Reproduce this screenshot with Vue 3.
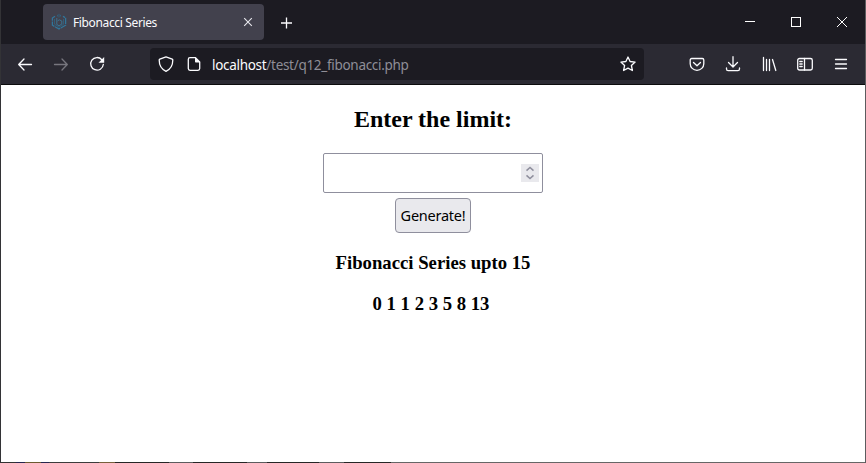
<script setup>
import { ref } from 'vue'

const limit = ref('')
const upto = 15

function fibonacci(max) {
  const out = []
  let a = 0
  let b = 1
  while (a <= max) {
    out.push(a)
    ;[a, b] = [b, a + b]
  }
  return out
}
const series = fibonacci(upto).join(' ')
</script>

<template>
  <div class="window">
    <header class="titlebar">
      <div class="tab">
        <svg class="favicon" width="16" height="18" viewBox="0 0 16 18" fill="none" stroke="#31769b">
          <path d="M4 3.200 1.400 5v7.200L8 16l6.600-3.800V5L12 3.200" stroke-width="1.300" stroke-dasharray="6 .7" />
          <path d="M5.800 5v6.500L8 12.700l2.800-1.600V8L8.300 6.800 6.500 8" stroke="#3b7391" stroke-width="1" />
          <path d="M3.500 6v5.200L8 14.200l4.500-2.800V6M6.500 3.500V1.800M8 4.500V.8M9.500 3.500V1.800" stroke="#2d6685" stroke-width=".8" />
        </svg>
        <span class="tab-title">Fibonacci Series</span>
        <svg class="tab-close" width="10" height="10" viewBox="0 0 10 10" fill="none" stroke="#e8e8ee" stroke-width="1.100">
          <path d="m1.200 1.200 7.600 7.600M8.800 1.200 1.200 8.800" />
        </svg>
      </div>
      <svg class="new-tab" width="12" height="13" viewBox="0 0 12 13" fill="none" stroke="#fbfbfe" stroke-width="1.300">
        <path d="M5.500 1.500v11M0 7h11" />
      </svg>
      <div class="controls">
        <svg width="46" height="44" viewBox="0 0 46 44"><path d="M18 21.500h10" stroke="#fff" /></svg>
        <svg width="46" height="44" viewBox="0 0 46 44"><rect x="18.500" y="17.500" width="9" height="9" fill="none" stroke="#fff" /></svg>
        <svg width="46" height="44" viewBox="0 0 46 44"><path d="m18 17 10 10M28 17 18 27" stroke="#fff" /></svg>
      </div>
    </header>

    <nav class="toolbar">
      <div class="nav-buttons">
        <svg class="icon" viewBox="0 0 16 16"><path d="M14.500 8.500H2M7 3 1.700 8.500 7 14" /></svg>
        <svg class="icon dim" viewBox="0 0 16 16"><path d="M1.500 8.500H14M9 3l5.300 5.500L9 14" /></svg>
        <svg class="icon" viewBox="0 0 16 16"><path d="M12.800 3.700A6.300 6.300 0 1 0 14.300 8.500" /><path class="solid" d="M15.200 1v5.700H9.500z" /></svg>
      </div>
      <div class="urlbar">
        <svg class="icon shield" viewBox="0 0 16 16"><path d="M8 .9 14.200 3.200c.5.200.6.500.6.900 0 5-1.800 9-6.800 11.200C3 13.100 1.200 9.100 1.200 4.100c0-.4.100-.7.600-.9z" /></svg>
        <svg class="icon page" viewBox="0 0 16 16"><path d="M9.500 1.700H4A1.700 1.700 0 0 0 2.300 3.400v9.200A1.700 1.700 0 0 0 4 14.300h8a1.700 1.700 0 0 0 1.700-1.700V6z" /><path class="solid" d="M9 1.200v4.200c0 .8.400 1.100 1.100 1.100h4.100z" /></svg>
        <span class="url"><b>localhost</b>/test/q12_fibonacci.php</span>
        <svg class="icon star" viewBox="0 0 16 16"><path d="m8 1 2.100 4.500 5 .6-3.700 3.400 1 5L8 12.100l-4.400 2.400 1-5L.9 6.100l5-.6z" /></svg>
      </div>
      <div class="tools">
        <svg class="icon" viewBox="0 0 16 16"><path d="M2.700 2.500h10.600c.9 0 1.500.6 1.500 1.500v3.700a6.800 6.600 0 0 1-13.600 0V4c0-.9.600-1.500 1.500-1.500zM4.500 6.500 8 9.800l3.500-3.300" /></svg>
        <svg class="icon" viewBox="0 0 16 16"><path d="M8 .7v10M3.500 6.500 8 11l4.500-4.500M1.500 12v1c0 1 .6 1.600 1.600 1.600h9.800c1 0 1.600-.6 1.600-1.600v-1" /></svg>
        <svg class="icon" viewBox="0 0 16 16"><path d="M2.500 1.500v13M5.500 3.500v11M8.500 3.500v11M11.500 3.500l3.300 11" /></svg>
        <svg class="icon" viewBox="0 0 16 16"><rect x=".7" y="2.500" width="14.600" height="11.500" rx="1.800" /><path d="M7.500 2.500V14M2.800 5.500h2.400M2.800 8h2.400M2.800 10.500h2.400" /></svg>
        <svg class="icon" viewBox="0 0 16 16"><path d="M2.500 3.500h11M2.500 8h11M2.500 12.500h11" /></svg>
      </div>
    </nav>

    <main class="page-body">
      <h2>Enter the limit:</h2>
      <div class="field">
        <input v-model="limit" type="text" aria-label="Limit" />
        <span class="spinner">
          <svg width="18" height="18" viewBox="0 0 18 18" fill="none" stroke="#8f8f9d" stroke-width="1.500"><path d="m5.500 6.600 3.500-3.200 3.500 3.200M5.500 11.400l3.500 3.200 3.500-3.200" /></svg>
        </span>
      </div>
      <button type="button"><span>Generate!</span></button>
      <h3>Fibonacci Series upto {{ upto }}</h3>
      <h3 class="series">{{ series }}</h3>
    </main>
    <div class="window-edge"></div>
  </div>
</template>

<style>
body { margin: 0; background: #fff; }
</style>

<style scoped>
.window {
  box-sizing: border-box;
  width: 866px;
  height: 463px;
  display: flex;
  flex-direction: column;
  border: solid;
  border-width: 0 1px;
  border-color: #333336 #5c5c5e #333336 #333336;
  overflow: hidden;
  background: #fff;
}
.window-edge {
  height: 1px;
  flex: none;
  background: linear-gradient(90deg, #333 0 15px, #26264e 15px 24px, #6b5a30 24px 40px, #26264e 40px 48px, #3c3c3c 48px 98px, #77603c 98px 114px, #262626 114px 168px, #5c5c5e 168px 192px, #262626 192px 246px, #5c5c5e 246px 266px, #262626 266px 318px, #5c5c5e 318px 343px, #262626 343px 390px, #666 390px);
}
.titlebar {
  height: 44px;
  flex: none;
  display: flex;
  align-items: center;
  background: #1c1b22;
}
.tab {
  box-sizing: border-box;
  width: 221px;
  height: 36px;
  margin-left: 42px;
  padding: 0 11px 0 8px;
  display: flex;
  align-items: center;
  border-radius: 4px;
  background: #42414d;
}
.tab-title {
  flex: 1;
  margin-left: 6px;
  padding-top: 1px;
  white-space: nowrap;
  font: 12px/18px "Noto Sans", "Open Sans", sans-serif;
  letter-spacing: -0.36px;
  color: #fbfbfe;
}
.new-tab { margin-left: 17px; }
.controls { display: flex; margin-left: auto; }
.toolbar {
  box-sizing: border-box;
  height: 41px;
  flex: none;
  display: flex;
  align-items: center;
  background: #2b2a33;
  border-bottom: 1px solid #0c0c0d;
}
.icon {
  width: 16px;
  height: 16px;
  flex: none;
  fill: none;
  stroke: #fbfbfe;
  stroke-width: 1.3;
  stroke-linecap: round;
  stroke-linejoin: round;
}
.dim { stroke: #77767e; }
.solid { fill: #fbfbfe; stroke: none; }
.nav-buttons { display: flex; gap: 20px; padding-left: 16px; }
.urlbar {
  box-sizing: border-box;
  width: 494px;
  height: 32px;
  margin-left: 45px;
  padding: 0 8px;
  display: flex;
  align-items: center;
  border-radius: 4px;
  background: #1c1b22;
}
.page { margin-left: 12px; }
.url {
  margin-left: 10px;
  padding-top: 2px;
  white-space: nowrap;
  font: 13.5px/20px "Noto Sans", "Open Sans", sans-serif;
  letter-spacing: -0.3px;
  color: #8f8e97;
}
.url b { font-weight: 400; color: #fbfbfe; }
.star { margin-left: auto; }
.tools { display: flex; gap: 20px; margin-left: 45px; }
.page-body {
  flex: 1;
  display: flex;
  flex-direction: column;
  align-items: center;
  font-family: "Liberation Serif", "Times New Roman", serif;
  color: #000;
}
h2 { margin: 20px 0 0; font-size: 24px; line-height: 28px; }
.field {
  box-sizing: border-box;
  width: 220px;
  height: 40px;
  margin-top: 20px;
  padding: 0 3px 0 5px;
  display: flex;
  align-items: center;
  border: 1px solid #8f8f9d;
  border-radius: 2px;
}
.field input {
  flex: 1;
  min-width: 0;
  padding: 0;
  border: 0;
  outline: 0;
  background: none;
  font: 15px "Noto Sans", sans-serif;
}
.spinner { display: flex; background: #e9e9ed; }
button {
  box-sizing: border-box;
  width: 76px;
  height: 35px;
  margin-top: 5px;
  padding: 0 0 2px;
  border: 1px solid #8f8f9d;
  border-radius: 4px;
  background: #e9e9ed;
  color: #000;
  white-space: nowrap;
  font: 14.5px/20px "Noto Sans", "Open Sans", sans-serif;
  letter-spacing: -0.25px;
}
h3 { margin: 19px 0 0; font-size: 18.72px; line-height: 22px; }
.series { padding-right: 4px; }
</style>
